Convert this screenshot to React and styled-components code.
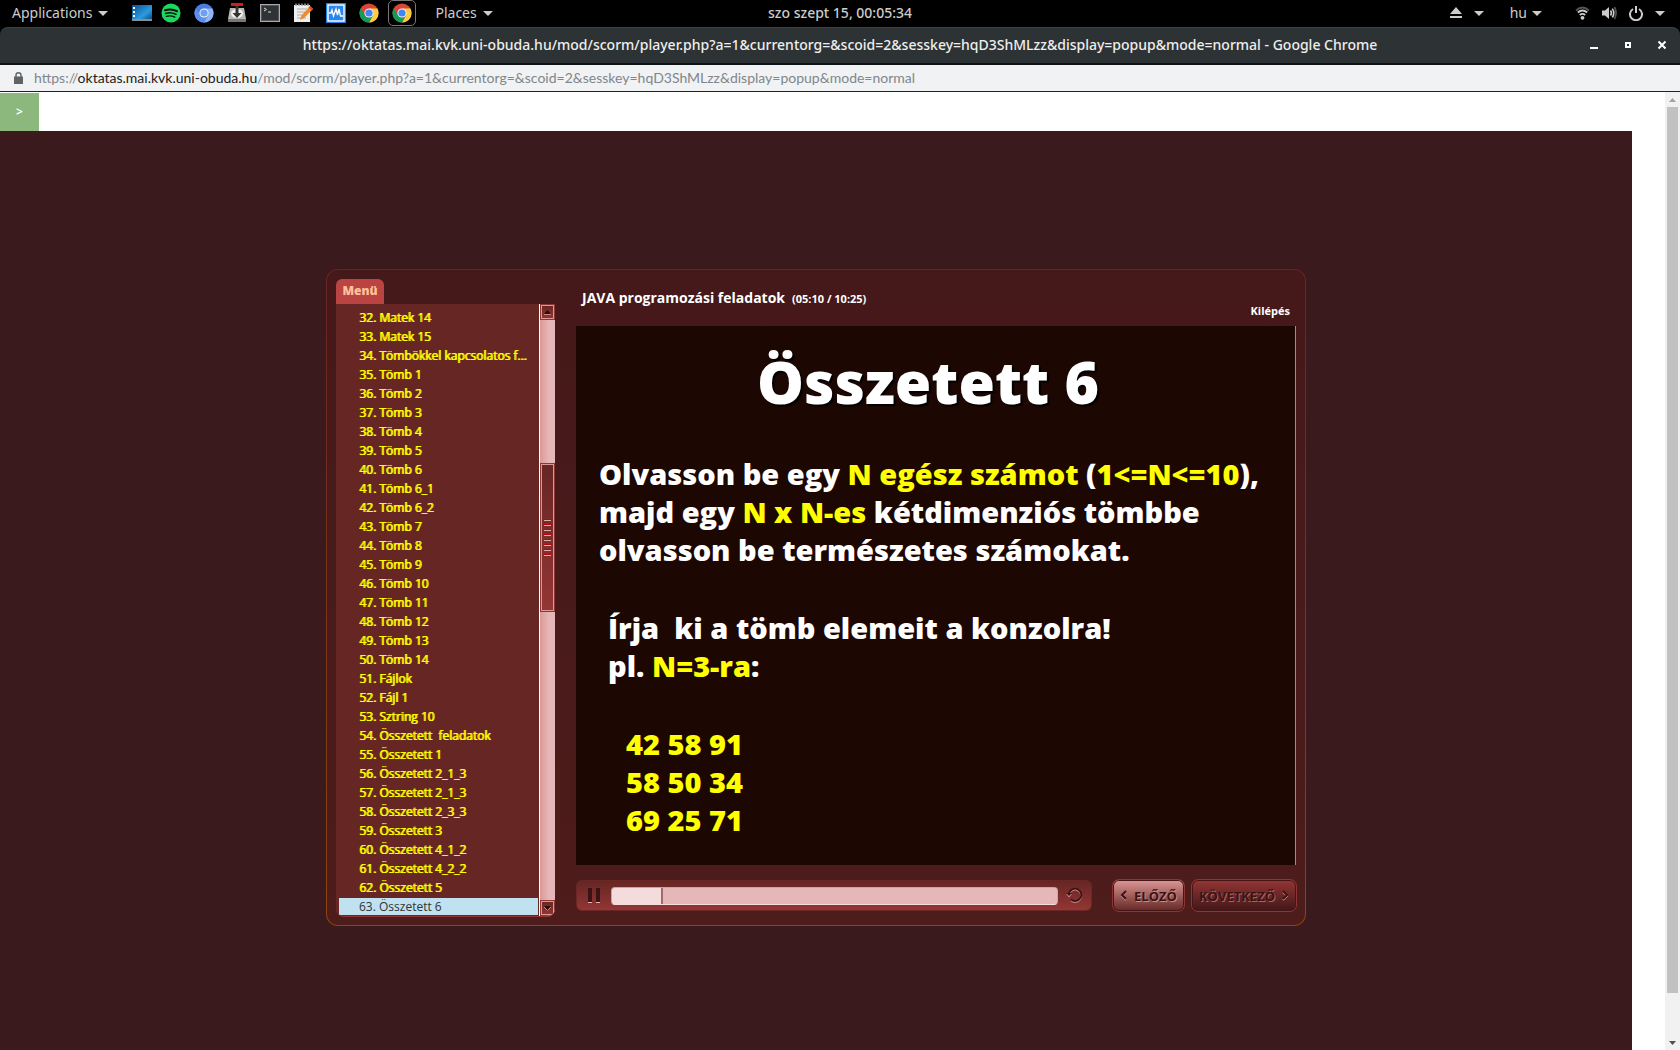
import React from "react";
import styled, { createGlobalStyle } from "styled-components";

const Global = createGlobalStyle`
  * { box-sizing: border-box; }
  body { margin: 0; overflow: hidden; background: #fff; font-family: "Noto Sans", "Open Sans", sans-serif; }
  button { font: inherit; color: inherit; margin: 0; padding: 0; border: 0; background: none; cursor: pointer; }
  a { color: inherit; text-decoration: none; }
  svg { display: block; flex: none; }
`;

const Screen = styled.div`
  height: 100vh;
  display: flex;
  flex-direction: column;
  overflow: hidden;
`;

/* desktop panel */
const Panel = styled.header`
  display: grid;
  grid-template-columns: 1fr auto 1fr;
  align-items: center;
  height: 27px;
  padding-bottom: 1px;
  background: #000;
  color: #ccc;
  font-size: 14px;
  line-height: 20px;
  flex: none;
`;
const Clock = styled.time`
  font-weight: 500;
`;
const PanelSide = styled.div`
  display: flex;
  align-items: center;
  justify-content: ${(p) => (p.$end ? "flex-end" : "flex-start")};
  padding: 0 15px 0 12px;
`;
const PanelButton = styled.button`
  display: flex;
  align-items: center;
  gap: 6px;
`;
const Launchers = styled.nav`
  display: flex;
  align-items: center;
  gap: 13px;
  margin: 0 19px 0 24px;
`;
const Launcher = styled.button`
  display: grid;
  place-items: center;
  height: 26px;
  width: ${(p) => (p.$active ? "28px" : "20px")};
  margin-left: ${(p) => (p.$active ? "-4px" : "0")};
  border: ${(p) => (p.$active ? "1px solid #777" : "0")};
  border-radius: 5px;
  &:first-child { margin-right: -4px; }
`;
const Tray = styled.div`
  display: flex;
  align-items: center;
  gap: ${(p) => p.$gap};
  margin-left: ${(p) => (p.$wide ? "33px" : "26px")};
`;

/* browser window */
const TitleBar = styled.div`
  display: grid;
  grid-template-columns: 1fr auto 1fr;
  align-items: center;
  height: 38px;
  padding-bottom: 2px;
  flex: none;
  background: #2d3234;
  border-top: 1px solid #3d4345;
  border-bottom: 2px solid #0d1214;
  border-radius: 8px 8px 0 0;
  color: #eeeeec;
`;
const Backdrop = styled.div`
  background: #000;
  flex: none;
`;
const WindowTitle = styled.h1`
  grid-column: 2;
  margin: 0;
  font-size: 14px;
  line-height: 20px;
  font-weight: 500;
  white-space: nowrap;
`;
const WindowButtons = styled.div`
  display: flex;
  justify-content: flex-end;
  gap: 24px;
  padding-right: 13px;
`;
const AddressBar = styled.div`
  display: flex;
  align-items: center;
  gap: 11px;
  height: 27px;
  flex: none;
  padding-left: 14px;
  background: #f1f2f4;
  border-bottom: 1px solid #222;
  color: #80868b;
  font-family: Lato, "Noto Sans", sans-serif;
  font-size: 14px;
  line-height: 20px;
`;
const Host = styled.span`
  color: #202124;
`;
const Viewport = styled.div`
  flex: 1;
  min-height: 0;
  display: flex;
`;
const Page = styled.main`
  flex: 1;
  padding: 1px 33px 0 0;
  display: flex;
  flex-direction: column;
`;
const NavToggle = styled.button`
  width: 39px;
  height: 38px;
  flex: none;
  background: #8cb87e;
  color: #fff;
  font-size: 12px;
  font-weight: 600;
  line-height: 16px;
`;
const Scroll = styled.div`
  width: 15px;
  display: flex;
  flex-direction: column;
  align-items: center;
  background: #f1f1f1;
`;
const ScrollArrow = styled.button`
  height: 15px;
  width: 15px;
  display: grid;
  place-items: center;
`;
const ScrollThumb = styled.div`
  width: 11px;
  flex: 0 0 886px;
  background: #c1c1c1;
  margin-bottom: auto;
`;

/* course player */
const Stage = styled.section`
  flex: 1;
  min-height: 0;
  display: flex;
  justify-content: center;
  align-items: flex-start;
  padding-top: 138px;
  background: #3a1a1d;
`;
const Player = styled.div`
  width: 100%;
  max-width: 980px;
  display: grid;
  grid-template-columns: 219px 1fr;
  column-gap: 21px;
  padding: 9px 8px 8px 9px;
  border-radius: 12px;
  border: 1px solid transparent;
  background: linear-gradient(#451819, #4d1c1b) padding-box, linear-gradient(#6a2422, #8e450c) border-box;
`;
const Sidebar = styled.aside`
  font-family: "Open Sans", "Noto Sans", sans-serif;
`;
const Tab = styled.button`
  display: block;
  width: 48px;
  height: 25px;
  padding-bottom: 2px;
  border-radius: 6px 6px 0 0;
  background: #b94442;
  color: #ffc299;
  font-size: 12px;
  line-height: 18px;
  font-weight: 800;
`;
const MenuBox = styled.div`
  display: flex;
  height: 613px;
  overflow: hidden;
  background: #652624;
  border-bottom: 1px solid #8f3534;
  border-radius: 0 0 8px 8px;
`;
const MenuList = styled.ul`
  flex: 1;
  min-width: 0;
  margin: 0;
  padding: 5px 1px 0 3px;
  list-style: none;
  border-right: 1px solid #fff;
`;
const MenuLink = styled.a`
  display: block;
  height: ${(p) => (p.$current ? "17px" : "19px")};
  padding-left: 20px;
  white-space: pre;
  font-size: 12px;
  line-height: ${(p) => (p.$current ? "17px" : "18px")};
  color: ${(p) => (p.$current ? "#333" : "#ff0")};
  background: ${(p) => (p.$current ? "#c0e1ef" : "transparent")};
  text-shadow: ${(p) => (p.$current ? "none" : "1px 0 currentColor")};
`;
const MenuScroll = styled.div`
  width: 15px;
  display: flex;
  flex-direction: column;
  background: linear-gradient(90deg, #dc9896, #e6b7b8 60%);
`;
const MenuHandle = styled.button`
  display: grid;
  place-items: center;
  width: 15px;
  height: ${(p) => p.$height};
  flex: none;
  border: 1px solid #8f3534;
  background: linear-gradient(#652624, #943635);
  box-shadow: inset 0 0 0 1px #dc9896;
`;
const MenuTrack = styled.div`
  height: ${(p) => p.$height};
  flex: ${(p) => (p.$height ? "none" : "1")};
`;
const Content = styled.div`
  min-width: 0;
  margin-top: -9px;
`;
const ContentHead = styled.div`
  display: flex;
  justify-content: space-between;
  height: 56px;
  padding: 17px 7px 0 6px;
  color: #fff;
  font-family: "Open Sans", "Noto Sans", sans-serif;
`;
const CourseTitle = styled.h2`
  margin: 0;
  font-size: 14px;
  line-height: 22px;
  font-weight: 700;
`;
const Elapsed = styled.span`
  margin-left: 7px;
  font-size: 11px;
`;
const Exit = styled.a`
  padding-top: 15px;
  font-size: 11px;
  line-height: 18px;
  font-weight: 700;
`;
const Slide = styled.article`
  height: 539px;
  margin-right: 1px;
  padding: 21px 0 0 23px;
  background: #1d0702;
  border-right: 1px solid #a08c8b;
  color: #fff;
  font-family: "Open Sans", Inter, sans-serif;
  font-weight: 800;
  display: flex;
  flex-direction: column;
  gap: 40px;
`;
const SlideTitle = styled.h3`
  margin: 0 38px 0 0;
  text-align: center;
  font-size: 59px;
  line-height: 68px;
  font-weight: 800;
  text-shadow: 2px 2px 1px #000;
`;
const Paragraph = styled.p`
  margin: 0;
  padding-left: ${(p) => p.$indent || "0"};
  font-size: 29px;
  line-height: 38px;
  white-space: pre;
  color: ${(p) => (p.$mark ? "#ff0" : "inherit")};
`;
const Mark = styled.span`
  color: #ff0;
`;
const Controls = styled.div`
  display: flex;
  align-items: center;
  margin-top: 14px;
`;
const Transport = styled.div`
  flex: 1;
  min-width: 0;
  display: flex;
  align-items: center;
  height: 31px;
  margin-right: 20px;
  padding: 0 8px 0 11px;
  border: 1px solid #6b2726;
  border-radius: 6px;
  background: linear-gradient(#652624, #943635);
`;
const Seek = styled.input`
  appearance: none;
  flex: 1;
  min-width: 0;
  height: 18px;
  margin: 0 8px 0 11px;
  border: 1px solid #c9a5a3;
  border-bottom-color: #f4dddd;
  border-radius: 4px;
  background: linear-gradient(90deg, #f4dcdc 50px, #e6b7b8 50px);
  &::-webkit-slider-thumb {
    appearance: none;
    width: 2px;
    height: 16px;
    background: #a56968;
  }
`;
const StepButton = styled.button`
  display: flex;
  align-items: center;
  justify-content: center;
  gap: 7px;
  width: ${(p) => p.$width};
  height: 33px;
  margin-right: ${(p) => (p.$muted ? "0" : "6px")};
  border: 1px solid #8f3534;
  border-radius: 7px;
  background: ${(p) => (p.$muted ? "linear-gradient(#943635, #421718)" : "linear-gradient(#dc9896, #652624)")};
  box-shadow: inset 0 0 0 1px #461516;
  color: #3d1314;
  font-family: "Open Sans", "Noto Sans", sans-serif;
  font-size: 13px;
  font-weight: 700;
  line-height: 18px;
  text-shadow: 1px 1px ${(p) => (p.$muted ? "#b06260" : "#c98886")};
`;

const Caret = () => (
  <svg width="10" height="5" viewBox="0 0 10 5"><path d="M0 0h10L5 5z" fill="#ccc" /></svg>
);
const DesktopIcon = () => (
  <svg width="20" height="16" viewBox="0 0 20 16">
    <defs><linearGradient id="dk" x1="0" y1="0" x2="1" y2="1"><stop offset="0" stopColor="#0b4f8c" /><stop offset=".6" stopColor="#2b9be0" /><stop offset="1" stopColor="#0c3e70" /></linearGradient></defs>
    <rect width="20" height="16" fill="url(#dk)" /><path d="M0 14h20v2H0z" fill="#8a8f94" />
    <path d="M1 2h2v2H1zM1 6h2v2H1zM1 10h2v2H1z" fill="#fff" />
  </svg>
);
const SpotifyIcon = () => (
  <svg width="20" height="20" viewBox="0 0 20 20">
    <circle cx="10" cy="10" r="9.5" fill="#1ed760" />
    <g fill="none" stroke="#04140a" strokeLinecap="round"><path d="M4 7.2q6.500-2 12 1" strokeWidth="2" /><path d="M4.600 10.400q5.500-1.600 10.300.9" strokeWidth="1.600" /><path d="M5.200 13.400q4.600-1.300 8.600.8" strokeWidth="1.300" /></g>
  </svg>
);
const ChromeIcon = ({ colors = ["#db4437", "#ffcd40", "#0f9d58", "#4285f4"] }) => (
  <svg width="20" height="20" viewBox="0 0 20 20">
    <circle cx="10" cy="10" r="9.500" fill={colors[0]} />
    <path d="M10 5.500h8.400A9.500 9.500 0 0 1 10 19.500l4-7.200z" fill={colors[1]} />
    <path d="M1.800 5.200A9.500 9.500 0 0 0 10 19.500l4-7.200-8-.1z" fill={colors[2]} />
    <circle cx="10" cy="10" r="4.600" fill="#f1f1f1" /><circle cx="10" cy="10" r="3.600" fill={colors[3]} />
  </svg>
);
const DiskIcon = () => (
  <svg width="20" height="20" viewBox="0 0 20 20">
    <path d="M3 5h14l2 11v3H1v-3z" fill="#b8b8b4" /><path d="M1 16h18v3H1z" fill="#77777a" />
    <ellipse cx="10" cy="10.500" rx="6" ry="4.500" fill="#f0f0ee" />
    <path d="M8.500 3h3v7h3L10 15l-4.500-5h3z" fill="#333" /><path d="M4 0h12v3H4z" fill="#d51c1c" />
  </svg>
);
const TerminalIcon = () => (
  <svg width="20" height="18" viewBox="0 0 20 18">
    <rect x=".5" y=".5" width="19" height="17" fill="#2e3436" stroke="#aaa" /><rect x="1.500" y="1.500" width="17" height="15" fill="none" stroke="#555" />
    <path d="M4 4l2.500 1.500L4 7M8 8h3" fill="none" stroke="#ddd" />
  </svg>
);
const NotesIcon = () => (
  <svg width="20" height="20" viewBox="0 0 20 20">
    <rect x="1" y="2" width="16" height="17" fill="#eee" /><path d="M2 1.500h14" stroke="#777" strokeWidth="2" strokeDasharray="2 1" />
    <path d="M4 6h10M4 9h8M4 12h6M4 15h9" stroke="#aaa" /><path d="M17 3l3 3-9 9-4 2 1.500-4.500z" fill="#f08b28" /><path d="M17 3l3 3-1.500 1.500-3-3z" fill="#d44" />
  </svg>
);
const MonitorIcon = () => (
  <svg width="20" height="20" viewBox="0 0 20 20">
    <rect width="20" height="20" fill="#2583e8" /><rect x="2" y="2" width="16" height="16" fill="#2a86ea" stroke="#fff" strokeWidth="1.400" />
    <path d="M3 10h2l1-3 1.500 6L10 6l1.500 6L13 6l1.500 7H17" fill="none" stroke="#fff" strokeWidth="1.300" />
  </svg>
);
const EjectIcon = () => (
  <svg width="12" height="12" viewBox="0 0 12 12" fill="#ccc"><path d="M6 0l6 7H0zM0 9h12v2H0z" /></svg>
);
const WifiIcon = () => (
  <svg width="15" height="14" viewBox="0 0 15 14" fill="none" stroke="#ccc" strokeWidth="1.800">
    <path d="M1 4.500Q7.500-1.500 14 4.500" stroke="#555" /><path d="M2.800 6.500q4.700-4 9.400 0" /><path d="M4.800 9q2.700-2.200 5.400 0" /><circle cx="7.500" cy="11.800" r="1.900" fill="#ccc" stroke="none" />
  </svg>
);
const VolumeIcon = () => (
  <svg width="15" height="14" viewBox="0 0 15 14" fill="none" strokeWidth="1.600">
    <path d="M0 4.500h3L7 1v12L3 9.500H0z" fill="#ccc" /><path d="M8.500 4.500q1.800 2.500 0 5M10.300 2.600q3 4.400 0 8.800" stroke="#ccc" /><path d="M12.400 1q3.400 6 0 12" stroke="#555" />
  </svg>
);
const PowerIcon = () => (
  <svg width="14" height="15" viewBox="0 0 14 15" fill="none" stroke="#ccc" strokeWidth="2"><path d="M4 3A6 6 0 1 0 10 3M7 0v7" /></svg>
);
const LockIcon = () => (
  <svg width="9" height="12" viewBox="0 0 9 12"><path d="M0 4.500h9V12H0z" fill="#5f6368" /><path d="M2 5V3q0-2.200 2.500-2.200T7 3v2" fill="none" stroke="#5f6368" strokeWidth="1.400" /></svg>
);
const Grip = () => (
  <svg width="7" height="38" viewBox="0 0 7 38">
    {[0, 5, 10, 15, 20, 25, 30, 35].map((y) => (
      <g key={y}><path d={`M0 ${y}h7v1H0z`} fill="#b3060e" /><path d={`M0 ${y + 1}h7v1H0z`} fill="#e6aaa9" /></g>
    ))}
  </svg>
);
const MenuArrow = ({ down }) => (
  <svg width="7" height="5" viewBox="0 0 7 5">
    <path d={down ? "M0 0h7L3.500 4z" : "M0 4h7L3.500 0z"} fill="#2b0b0b" />
    <path d={down ? "M0 1l3.500 3.500L7 1" : "M0 4.500h7"} fill="none" stroke="#c98886" />
  </svg>
);
const PauseIcon = () => (
  <svg width="12" height="16" viewBox="0 0 12 16"><path d="M0 0h4v15H0zM8 0h4v15H8z" fill="#3d1214" /><path d="M0 14h4v1H0zM8 14h4v1H8z" fill="#e6b7b8" /></svg>
);
const ReplayIcon = () => (
  <svg width="17" height="17" viewBox="0 0 17 17" fill="none">
    <path d="M3 7.500A6.200 6.200 0 1 1 5 13.500" stroke="#c98886" strokeWidth="1.800" /><path d="M3 6.500A6.200 6.200 0 1 1 5 12.500" stroke="#3d1214" strokeWidth="1.800" />
    <path d="M0 7h6L3 10.500z" fill="#c98886" /><path d="M0 6h6L3 9z" fill="#3d1214" />
  </svg>
);
const Chevron = ({ right }) => (
  <svg width="7" height="11" viewBox="0 0 7 11" fill="none">
    <path d={right ? "M1 2l4 4-4 4" : "M6 2L2 6l4 4"} stroke="#c98886" strokeWidth="2" />
    <path d={right ? "M1 1l4 4-4 4" : "M6 1L2 5l4 4"} stroke="#3d1214" strokeWidth="2" />
  </svg>
);

const chromium = ["#4a7de0", "#8db4f8", "#5d90ec", "#6f9ff2"];
const launchers = [
  ["Desktop", DesktopIcon], ["Spotify", SpotifyIcon], ["Chromium", () => <ChromeIcon colors={chromium} />],
  ["Installer", DiskIcon], ["Terminal", TerminalIcon], ["Text editor", NotesIcon],
  ["System monitor", MonitorIcon], ["Chrome", ChromeIcon], ["Chrome window", ChromeIcon],
];
const items = [
  "Matek 14", "Matek 15", "Tömbökkel kapcsolatos f...", "Tömb 1", "Tömb 2", "Tömb 3", "Tömb 4", "Tömb 5",
  "Tömb 6", "Tömb 6_1", "Tömb 6_2", "Tömb 7", "Tömb 8", "Tömb 9", "Tömb 10", "Tömb 11", "Tömb 12", "Tömb 13",
  "Tömb 14", "Fájlok", "Fájl 1", "Sztring 10", "Összetett  feladatok", "Összetett 1", "Összetett 2_1_3",
  "Összetett 2_1_3", "Összetett 2_3_3", "Összetett 3", "Összetett 4_1_2", "Összetett 4_2_2", "Összetett 5", "Összetett 6",
];
const host = "oktatas.mai.kvk.uni-obuda.hu";
const path = "/mod/scorm/player.php?a=1&currentorg=&scoid=2&sesskey=hqD3ShMLzz&display=popup&mode=normal";

export default function App() {
  return (
    <Screen>
      <Global />
      <Panel>
        <PanelSide>
          <PanelButton>Applications <Caret /></PanelButton>
          <Launchers>
            {launchers.map(([name, Icon], i) => (
              <Launcher key={name} aria-label={name} $active={i === 8}><Icon /></Launcher>
            ))}
          </Launchers>
          <PanelButton>Places <Caret /></PanelButton>
        </PanelSide>
        <Clock>szo szept 15, 00:05:34</Clock>
        <PanelSide $end>
          <Tray $gap="12px"><EjectIcon /><Caret /></Tray>
          <Tray $gap="5px">hu <Caret /></Tray>
          <Tray $gap="12px" $wide><WifiIcon /><VolumeIcon /><PowerIcon /><Caret /></Tray>
        </PanelSide>
      </Panel>
      <Backdrop>
        <TitleBar>
          <WindowTitle>{`https://${host}${path} - Google Chrome`}</WindowTitle>
          <WindowButtons>
            <button aria-label="Minimize"><svg width="10" height="10" viewBox="0 0 10 10"><path d="M1 7h8v2H1z" fill="#fff" /></svg></button>
            <button aria-label="Maximize"><svg width="10" height="10" viewBox="0 0 10 10"><path d="M3 3h4v4H3z" fill="none" stroke="#fff" strokeWidth="2" /></svg></button>
            <button aria-label="Close"><svg width="10" height="10" viewBox="0 0 10 10"><path d="M1.500 1.500l7 7M8.500 1.500l-7 7" stroke="#fff" strokeWidth="2" /></svg></button>
          </WindowButtons>
        </TitleBar>
      </Backdrop>
      <AddressBar>
        <LockIcon />
        <span>https://<Host>{host}</Host>{path}</span>
      </AddressBar>
      <Viewport>
        <Page>
          <NavToggle>&gt;</NavToggle>
          <Stage>
            <Player>
              <Sidebar>
                <Tab>Menü</Tab>
                <MenuBox>
                  <MenuList>
                    {items.map((name, i) => (
                      <li key={i}><MenuLink href="#" $current={i === items.length - 1}>{`${i + 32}. ${name}`}</MenuLink></li>
                    ))}
                  </MenuList>
                  <MenuScroll>
                    <MenuHandle aria-label="Scroll up" $height="16px"><MenuArrow /></MenuHandle>
                    <MenuTrack $height="143px" />
                    <MenuHandle aria-label="Scroll position" $height="149px"><Grip /></MenuHandle>
                    <MenuTrack />
                    <MenuHandle aria-label="Scroll down" $height="16px"><MenuArrow down /></MenuHandle>
                  </MenuScroll>
                </MenuBox>
              </Sidebar>
              <Content>
                <ContentHead>
                  <CourseTitle>JAVA programozási feladatok<Elapsed>(05:10 / 10:25)</Elapsed></CourseTitle>
                  <Exit href="#">Kilépés</Exit>
                </ContentHead>
                <Slide>
                  <SlideTitle>Összetett 6</SlideTitle>
                  <Paragraph>
                    Olvasson be egy <Mark>N egész számot</Mark> (<Mark>{"1<=N<=10"}</Mark>),{"\n"}
                    majd egy <Mark>N x N-es</Mark> kétdimenziós tömbbe{"\n"}
                    olvasson be természetes számokat.
                  </Paragraph>
                  <Paragraph $indent="9px">
                    {"Írja  ki a tömb elemeit a konzolra!\npl. "}<Mark>N=3-ra</Mark>:
                  </Paragraph>
                  <Paragraph $indent="27px" $mark>{"42 58 91\n58 50 34\n69 25 71"}</Paragraph>
                </Slide>
                <Controls>
                  <Transport>
                    <button aria-label="Pause"><PauseIcon /></button>
                    <Seek type="range" aria-label="Position" min="0" max="100" defaultValue="11" />
                    <button aria-label="Replay"><ReplayIcon /></button>
                  </Transport>
                  <StepButton $width="73px"><Chevron />ELŐZŐ</StepButton>
                  <StepButton $width="106px" $muted>KÖVETKEZŐ<Chevron right /></StepButton>
                </Controls>
              </Content>
            </Player>
          </Stage>
        </Page>
        <Scroll>
          <ScrollArrow aria-label="Up"><svg width="7" height="4" viewBox="0 0 7 4"><path d="M0 4h7L3.500 0z" fill="#a3a3a3" /></svg></ScrollArrow>
          <ScrollThumb />
          <ScrollArrow aria-label="Down"><svg width="7" height="4" viewBox="0 0 7 4"><path d="M0 0h7L3.500 4z" fill="#505050" /></svg></ScrollArrow>
        </Scroll>
      </Viewport>
    </Screen>
  );
}
